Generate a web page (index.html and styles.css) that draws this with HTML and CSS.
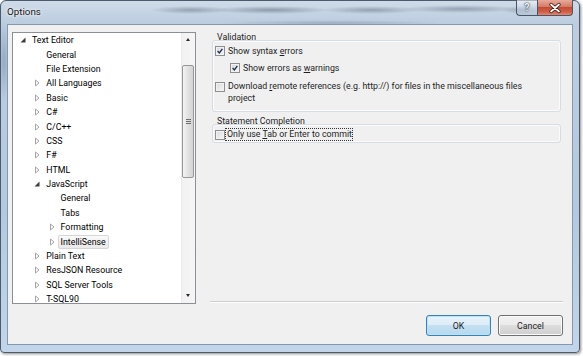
FILE: index.html
```html
<!DOCTYPE html>
<html lang="en">
<head>
    <meta charset="UTF-8">
    <title>Options</title>
    <link rel="stylesheet" href="styles.css">
</head>
<body>
    <svg class="defs" width="0" height="0">
        <symbol id="tri-closed" viewBox="0 0 6 8"><path d="M1.5 1 L5 4 L1.5 7 Z" fill="#fff" stroke="#a6a6a6" stroke-width="1"/></symbol>
        <symbol id="tri-open" viewBox="0 0 6 6"><path d="M5.5 0.5 L5.5 5.5 L0.5 5.5 Z" fill="#3c3c3c"/></symbol>
        <symbol id="tick" viewBox="0 0 10 10"><path d="M2 5 L4.2 7.4 L8 2.4" fill="none" stroke="#1f2f58" stroke-width="1.7"/></symbol>
    </svg>

    <div class="window">
        <div class="titlebar">
            <span class="title">Options</span>
            <div class="caption-buttons">
                <span class="cap-btn help">?</span>
                <span class="cap-btn close">
                    <svg width="34" height="14" viewBox="0 0 34 14">
                        <path d="M13 3.5 L21 10.5 M21 3.5 L13 10.5" stroke="#3a1c16" stroke-width="3.4" stroke-linecap="round"/>
                        <path d="M13 3.5 L21 10.5 M21 3.5 L13 10.5" stroke="#fff" stroke-width="1.7" stroke-linecap="round"/>
                    </svg>
                </span>
            </div>
        </div>

        <div class="client">
            <div class="main">
                <div class="tree">
                    <ul class="tree-list">
                        <li class="row lvl1"><svg class="exp open"><use href="#tri-open"/></svg><span class="label">Text Editor</span></li>
                        <li class="row lvl2"><span class="exp"></span><span class="label">General</span></li>
                        <li class="row lvl2"><span class="exp"></span><span class="label">File Extension</span></li>
                        <li class="row lvl2"><svg class="exp"><use href="#tri-closed"/></svg><span class="label">All Languages</span></li>
                        <li class="row lvl2"><svg class="exp"><use href="#tri-closed"/></svg><span class="label">Basic</span></li>
                        <li class="row lvl2"><svg class="exp"><use href="#tri-closed"/></svg><span class="label">C#</span></li>
                        <li class="row lvl2"><svg class="exp"><use href="#tri-closed"/></svg><span class="label">C/C++</span></li>
                        <li class="row lvl2"><svg class="exp"><use href="#tri-closed"/></svg><span class="label">CSS</span></li>
                        <li class="row lvl2"><svg class="exp"><use href="#tri-closed"/></svg><span class="label">F#</span></li>
                        <li class="row lvl2"><svg class="exp"><use href="#tri-closed"/></svg><span class="label">HTML</span></li>
                        <li class="row lvl2"><svg class="exp open"><use href="#tri-open"/></svg><span class="label">JavaScript</span></li>
                        <li class="row lvl3"><span class="exp"></span><span class="label">General</span></li>
                        <li class="row lvl3"><span class="exp"></span><span class="label">Tabs</span></li>
                        <li class="row lvl3"><svg class="exp"><use href="#tri-closed"/></svg><span class="label">Formatting</span></li>
                        <li class="row lvl3"><svg class="exp"><use href="#tri-closed"/></svg><span class="label selected">IntelliSense</span></li>
                        <li class="row lvl2"><svg class="exp"><use href="#tri-closed"/></svg><span class="label">Plain Text</span></li>
                        <li class="row lvl2"><svg class="exp"><use href="#tri-closed"/></svg><span class="label">ResJSON Resource</span></li>
                        <li class="row lvl2"><svg class="exp"><use href="#tri-closed"/></svg><span class="label">SQL Server Tools</span></li>
                        <li class="row lvl2"><svg class="exp"><use href="#tri-closed"/></svg><span class="label">T-SQL90</span></li>
                    </ul>
                    <div class="scrollbar">
                        <div class="sb-arrow up"></div>
                        <div class="track">
                            <div class="thumb">
                                <svg width="5" height="5" viewBox="0 0 5 5"><path d="M0 0.5 H5 M0 2.5 H5 M0 4.5 H5" stroke="#6d6d6d" stroke-width="1"/></svg>
                            </div>
                        </div>
                        <div class="sb-arrow down"></div>
                    </div>
                </div>

                <div class="page">
                    <div class="group">
                        <div class="group-label">Validation</div>
                        <div class="group-box validation">
                            <label class="check">
                                <span class="box"><svg><use href="#tick"/></svg></span>
                                <span>Show syntax <u>e</u>rrors</span>
                            </label>
                            <label class="check sub">
                                <span class="box"><svg><use href="#tick"/></svg></span>
                                <span>Show errors as <u>w</u>arnings</span>
                            </label>
                            <label class="check multi">
                                <span class="box"></span>
                                <span>Download <u>r</u>emote references (e.g. http://) for files in the miscellaneous files project</span>
                            </label>
                        </div>
                    </div>

                    <div class="group second">
                        <div class="group-label">Statement Completion</div>
                        <div class="group-box completion">
                            <label class="check focused">
                                <span class="box"></span>
                                <span class="focus">Only use <u>T</u>ab or Enter to commit</span>
                            </label>
                        </div>
                    </div>

                    <div class="separator"></div>
                </div>
            </div>

            <div class="buttons">
                <button class="btn default">OK</button>
                <button class="btn">Cancel</button>
            </div>
        </div>
    </div>
</body>
</html>
```

FILE: styles.css
```css
* {
    margin: 0;
    padding: 0;
    box-sizing: border-box;
}

body {
    width: 583px;
    height: 356px;
    background: #fff;
    font-family: Roboto, 'Liberation Sans', sans-serif;
    font-size: 8.8px;
    color: #000;
    overflow: hidden;
}

.defs {
    position: absolute;
}

/* glass frame */
.window {
    width: 580px;
    height: 353px;
    border: 1px solid #4b5b6c;
    border-radius: 6px 6px 4px 4px;
    padding: 0 6px 7px;
    display: flex;
    flex-direction: column;
    box-shadow: 1px 1px 3px rgba(0, 0, 0, 0.45);
    background:
        radial-gradient(40px 4px at 190px 9px, rgba(70, 82, 100, 0.4), transparent),
        radial-gradient(60px 4px at 270px 9px, rgba(70, 82, 100, 0.45), transparent),
        radial-gradient(50px 4px at 370px 9px, rgba(70, 82, 100, 0.4), transparent),
        radial-gradient(60px 4px at 460px 8px, rgba(70, 82, 100, 0.4), transparent),
        radial-gradient(20px 4px at 520px 9px, rgba(70, 82, 100, 0.3), transparent),
        radial-gradient(110px 3px at 330px 22px, rgba(70, 82, 100, 0.25), transparent),
        radial-gradient(6px 40px at 3px 60px, rgba(60, 90, 130, 0.3), transparent),
        linear-gradient(#cfdbe8, #bccde0 22px, #b4c9df 60%, #c2d5ea);
}

.titlebar {
    height: 23px;
    display: flex;
    align-items: flex-start;
}

.title {
    font-size: 9.8px;
    line-height: 22px;
    color: #141414;
    text-shadow: 0 0 4px #fff, 0 0 2px #fff;
}

.caption-buttons {
    margin-left: auto;
    margin-top: -1px;
    display: flex;
}

.cap-btn {
    height: 16px;
    border: 1px solid #4a5665;
    border-top: none;
    display: flex;
    align-items: center;
    justify-content: center;
}

.help {
    width: 21px;
    border-right: none;
    border-radius: 0 0 0 4px;
    background: linear-gradient(rgba(255, 255, 255, 0.55), rgba(200, 214, 230, 0.5) 50%, rgba(170, 190, 210, 0.6));
    color: #f4f4f4;
    font-weight: bold;
    font-size: 10px;
    text-shadow: 0 0 1px #333, 0 0 2px #333;
}

.close {
    width: 36px;
    border-radius: 0 0 4px 0;
    background: linear-gradient(#e9a99b, #d47a66 45%, #c44c33 50%, #d0604a 80%, #e5896f);
}

/* client area */
.client {
    flex: 1;
    border: 1px solid #8599ae;
    background: #f0f0f0;
    padding: 7px 9px 8px 4px;
    display: flex;
    flex-direction: column;
    gap: 11px;
}

.main {
    display: flex;
    gap: 16px;
    height: 272px;
}

/* tree view */
.tree {
    width: 184px;
    border: 1px solid #8c9096;
    background: #fff;
    display: flex;
    overflow: hidden;
}

.tree-list {
    flex: 1;
    list-style: none;
}

.row {
    display: flex;
    align-items: center;
    height: 14.4px;
    white-space: nowrap;
}

.lvl1 { padding-left: 5px; }
.lvl2 { padding-left: 19.3px; }
.lvl3 { padding-left: 33.6px; }

.exp {
    width: 10px;
    height: 8px;
    margin-right: 1px;
    flex: none;
    padding: 0 2px;
}

.exp.open {
    height: 6px;
    padding: 0 2px;
}

.label {
    display: block;
    padding: 0 2px;
    line-height: 12px;
    border: 1px solid transparent;
    border-radius: 2px;
}

.label.selected {
    border-color: #d6d6d6;
    background: linear-gradient(#fafafa, #e9e9e9);
}

.scrollbar {
    width: 14px;
    display: flex;
    flex-direction: column;
    background: linear-gradient(to right, #e4e4e4, #f2f2f2 1px, #f5f5f5);
}

.sb-arrow {
    height: 13px;
    display: flex;
    justify-content: center;
    align-items: center;
}

.sb-arrow.down {
    height: 15px;
}

.sb-arrow::after {
    content: '';
    border-left: 2.5px solid transparent;
    border-right: 2.5px solid transparent;
}

.sb-arrow.up::after {
    border-bottom: 3px solid #2a2a2a;
}

.sb-arrow.down::after {
    border-top: 3px solid #2a2a2a;
}

.track {
    flex: 1;
    padding: 19px 1px 0;
}

.thumb {
    height: 113px;
    border: 1px solid #979797;
    border-radius: 2px;
    background: linear-gradient(to right, #f4f4f4, #e3e3e3 45%, #d4d4d4);
    display: flex;
    align-items: center;
    justify-content: center;
}

/* options page */
.page {
    flex: 1;
    display: flex;
    flex-direction: column;
}

.group-label {
    line-height: 11px;
    padding-left: 5px;
    color: #1e1e1e;
}

.group-box {
    margin-top: -3px;
    margin-right: 2px;
    border: 1px solid #d5dde3;
    border-radius: 3px;
    box-shadow: inset 0 0 0 1px #fbfbfb;
}

.validation {
    padding: 3px 20px 7px 2px;
}

.second {
    margin-top: 4px;
}

.completion {
    padding: 2px 0 1px 2px;
}

.check {
    display: flex;
    align-items: flex-start;
    line-height: 14px;
    color: #1e1e1e;
}

.check u {
    text-underline-offset: 1px;
}

.box {
    width: 10px;
    height: 10px;
    margin-top: 2px;
    margin-right: 3px;
    flex: none;
    border: 1px solid #8f8f8f;
    background: linear-gradient(135deg, #d9d9d9, #f7f7f7);
    box-shadow: inset 0 0 0 1px #f2f2f2;
}

.box svg {
    display: block;
    width: 8px;
    height: 8px;
}

.check.sub {
    margin-top: 3px;
    margin-left: 15px;
}

.check.multi {
    margin-top: 6px;
    line-height: 11.5px;
}

.check.multi .box {
    margin-top: 1px;
}

.check.focused {
    line-height: 13px;
    margin-top: 1px;
}

.check.focused .box {
    margin-right: 0;
    margin-top: 1.5px;
}

.focus {
    padding: 0 1px 0 2px;
    outline: 1px dotted #333;
    outline-offset: -1px;
}

.separator {
    margin-top: auto;
    margin-bottom: 1px;
    margin-left: -2px;
    border-top: 1px solid #cdcdcd;
    border-bottom: 1px solid #fff;
}

/* dialog buttons */
.buttons {
    display: flex;
    justify-content: flex-end;
    gap: 7px;
}

.btn {
    width: 65px;
    height: 21px;
    border: 1px solid #707070;
    border-radius: 3px;
    font-family: inherit;
    font-size: 8.8px;
    color: #1e1e1e;
    background: linear-gradient(#f2f2f2, #ebebeb 50%, #dddddd 50%, #cfcfcf);
    box-shadow: inset 0 0 0 1px #fbfbfb;
}

.btn.default {
    border-color: #3c7fb1;
    background: linear-gradient(#e8f3fa, #dcecf8 50%, #c4e0f2 50%, #b6d8ef);
    box-shadow: inset 0 0 0 1px #b5e4fb;
}
```
